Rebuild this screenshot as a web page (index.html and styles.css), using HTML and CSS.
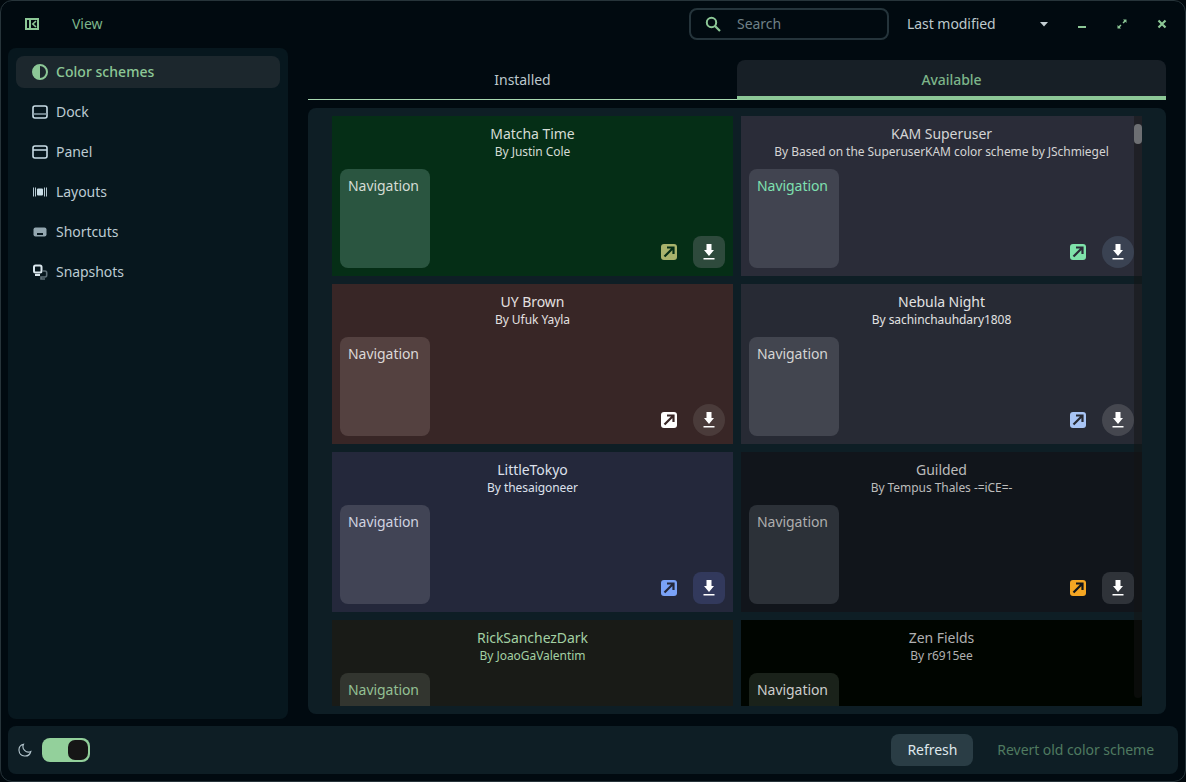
FILE: index.html
```html
<!DOCTYPE html>
<html lang="en">
<head>
  <meta charset="UTF-8" />
  <title>Color schemes</title>
  <link rel="stylesheet" href="styles.css">
</head>
<body>
  <svg class="sprites" width="0" height="0">
    <symbol id="arrow" viewBox="0 0 16 16">
      <rect width="16" height="16" rx="3" fill="var(--accent)" />
      <path d="M3.5 12.5 L11.5 4.5 M6 3.5 H12.5 V10" fill="none" stroke="var(--arrow)" stroke-width="2.2" />
    </symbol>
    <symbol id="download" viewBox="0 0 16 16">
      <path d="M5.5 0 H10.5 V6 H13 L8 12 L3 6 H5.5 Z M2.5 14 H13.5 V15.6 H2.5 Z" fill="#fff" />
    </symbol>
  </svg>

  <div class="window">
    <header class="titlebar">
      <svg class="logo" width="14" height="12" viewBox="0 0 14 12">
        <path fill-rule="evenodd" d="M0 0 H14 V12 H0 Z M2 2 V10 H12 V2 Z" fill="#8cc796" />
        <path d="M4 2 H6 V10 H4 Z" fill="#8cc796" />
        <path d="M11 3 L7.8 6 L11 9" fill="none" stroke="#8cc796" stroke-width="1.6" />
      </svg>
      <span class="view-menu">View</span>
      <div class="search">
        <svg width="16" height="16" viewBox="0 0 16 16"><circle cx="6.5" cy="6.5" r="4.7" fill="none" stroke="#8cc796" stroke-width="2" /><path d="M10 10 L15 15" stroke="#8cc796" stroke-width="2.2" /></svg>
        <span>Search</span>
      </div>
      <span class="sort">Last modified</span>
      <div class="window-controls">
        <svg class="caret" width="10" height="6" viewBox="0 0 10 6"><path d="M1 1 H9 L5 5.5 Z" fill="#c5d0d4" /></svg>
        <svg width="10" height="10" viewBox="0 0 10 10"><path d="M1 7 H9 V9 H1 Z" fill="#8cc796" /></svg>
        <svg width="10" height="10" viewBox="0 0 10 10"><path d="M6 0.5 H9.5 V4 L8.3 2.8 L6.6 4.5 L5.5 3.4 L7.2 1.7 Z M4 9.5 H0.5 V6 L1.7 7.2 L3.4 5.5 L4.5 6.6 L2.8 8.3 Z" fill="#8cc796" /></svg>
        <svg width="10" height="10" viewBox="0 0 10 10"><path d="M1.5 1.5 L8.5 8.5 M8.5 1.5 L1.5 8.5" stroke="#8cc796" stroke-width="2.2" /></svg>
      </div>
    </header>

    <div class="main">
      <nav class="sidebar">
        <a class="side-item active">
          <svg width="16" height="16" viewBox="0 0 16 16"><circle cx="8" cy="8" r="7" fill="none" stroke="#8cc796" stroke-width="2" /><path d="M8 1 A7 7 0 0 0 8 15 Z" fill="#8cc796" /></svg>
          <span>Color schemes</span>
        </a>
        <a class="side-item">
          <svg width="16" height="16" viewBox="0 0 16 16"><rect x="1" y="2" width="14" height="12" rx="2" fill="none" stroke="#c9dde6" stroke-width="1.6" /><path d="M1 10 H15" stroke="#8fa3ac" stroke-width="1.4" /></svg>
          <span>Dock</span>
        </a>
        <a class="side-item">
          <svg width="16" height="16" viewBox="0 0 16 16"><rect x="1" y="2" width="14" height="12" rx="2" fill="none" stroke="#c9dde6" stroke-width="1.6" /><path d="M1 6 H15" stroke="#c9dde6" stroke-width="1.4" /></svg>
          <span>Panel</span>
        </a>
        <a class="side-item">
          <svg width="16" height="16" viewBox="0 0 16 16"><rect x="5" y="4.5" width="6" height="7" rx="1" fill="#c9dde6" /><path d="M1.5 3.5 V12.5 M3.5 3.5 V12.5 M12.5 3.5 V12.5 M14.5 3.5 V12.5" stroke="#c9dde6" stroke-width="0.9" /></svg>
          <span>Layouts</span>
        </a>
        <a class="side-item">
          <svg width="16" height="16" viewBox="0 0 16 16"><rect x="1.5" y="3.5" width="13" height="9" rx="2" fill="#93a7b0" /><rect x="5" y="9" width="6" height="2" fill="#07171e" /></svg>
          <span>Shortcuts</span>
        </a>
        <a class="side-item">
          <svg width="16" height="16" viewBox="0 0 16 16"><path d="M11 7 H13 Q14.7 7 14.7 9 V11 Q14.7 13 13 13 H9 V15 H13" fill="none" stroke="#5f7078" stroke-width="1.6" /><rect x="2" y="1.5" width="7.5" height="7" rx="1.5" fill="none" stroke="#dbe8ee" stroke-width="2" /><path d="M3 11 H8" stroke="#dbe8ee" stroke-width="2" /></svg>
          <span>Snapshots</span>
        </a>
      </nav>

      <section class="content">
        <div class="tabs">
          <div class="tab">Installed</div>
          <div class="tab selected">Available</div>
        </div>
        <div class="panel">
          <div class="scroller">
            <div class="grid">

              <article class="card matcha">
                <h3>Matcha Time</h3>
                <p>By Justin Cole</p>
                <div class="card-body">
                  <div class="nav-box">Navigation</div>
                  <svg class="arrow-icon"><use href="#arrow" /></svg>
                  <button class="get"><svg width="16" height="16"><use href="#download" /></svg></button>
                </div>
              </article>

              <article class="card kam">
                <h3>KAM Superuser</h3>
                <p>By Based on the SuperuserKAM color scheme by JSchmiegel</p>
                <div class="card-body">
                  <div class="nav-box">Navigation</div>
                  <svg class="arrow-icon"><use href="#arrow" /></svg>
                  <button class="get round"><svg width="16" height="16"><use href="#download" /></svg></button>
                </div>
              </article>

              <article class="card brown">
                <h3>UY Brown</h3>
                <p>By Ufuk Yayla</p>
                <div class="card-body">
                  <div class="nav-box">Navigation</div>
                  <svg class="arrow-icon"><use href="#arrow" /></svg>
                  <button class="get round"><svg width="16" height="16"><use href="#download" /></svg></button>
                </div>
              </article>

              <article class="card nebula">
                <h3>Nebula Night</h3>
                <p>By sachinchauhdary1808</p>
                <div class="card-body">
                  <div class="nav-box">Navigation</div>
                  <svg class="arrow-icon"><use href="#arrow" /></svg>
                  <button class="get round"><svg width="16" height="16"><use href="#download" /></svg></button>
                </div>
              </article>

              <article class="card tokyo">
                <h3>LittleTokyo</h3>
                <p>By thesaigoneer</p>
                <div class="card-body">
                  <div class="nav-box">Navigation</div>
                  <svg class="arrow-icon"><use href="#arrow" /></svg>
                  <button class="get"><svg width="16" height="16"><use href="#download" /></svg></button>
                </div>
              </article>

              <article class="card guilded">
                <h3>Guilded</h3>
                <p>By Tempus Thales -=iCE=-</p>
                <div class="card-body">
                  <div class="nav-box">Navigation</div>
                  <svg class="arrow-icon"><use href="#arrow" /></svg>
                  <button class="get"><svg width="16" height="16"><use href="#download" /></svg></button>
                </div>
              </article>

              <article class="card rick">
                <h3>RickSanchezDark</h3>
                <p>By JoaoGaValentim</p>
                <div class="card-body">
                  <div class="nav-box">Navigation</div>
                </div>
              </article>

              <article class="card zen">
                <h3>Zen Fields</h3>
                <p>By r6915ee</p>
                <div class="card-body">
                  <div class="nav-box">Navigation</div>
                </div>
              </article>

            </div>
            <div class="scrollbar"><div class="thumb"></div></div>
          </div>
        </div>
      </section>
    </div>

    <footer class="bottom-bar">
      <svg width="14" height="14" viewBox="0 0 14 14"><path d="M5.5 1.2 A6 6 0 1 0 12.8 8.5 A5.5 5.5 0 0 1 5.5 1.2 Z" fill="none" stroke="#b4c6ce" stroke-width="1.1" /></svg>
      <div class="switch"><div class="knob"></div></div>
      <button class="refresh">Refresh</button>
      <span class="revert">Revert old color scheme</span>
    </footer>
  </div>
</body>
</html>
```

FILE: styles.css
```css
html, body {
  margin: 0;
  height: 100%;
}
body {
  font-family: "Noto Sans", sans-serif;
  font-size: 14px;
  letter-spacing: -0.05px;
  background: #01080d;
  overflow: hidden;
}
.sprites {
  position: absolute;
}
.window {
  box-sizing: border-box;
  height: 782px;
  display: flex;
  flex-direction: column;
  background: #010a10;
  border: 1px solid #27343a;
  border-radius: 12px;
  overflow: hidden;
}

/* title bar */
.titlebar {
  height: 46px;
  margin-bottom: 1px;
  flex: none;
  display: flex;
  align-items: center;
  padding: 0 18px 0 24px;
  color: #bcc8cc;
}
.logo {
  margin-right: 33px;
}
.view-menu {
  color: #7db58a;
  width: 31px;
  margin: 0 586px 2px 0;
}
.search {
  box-sizing: border-box;
  flex: none;
  width: 200px;
  height: 32px;
  display: flex;
  align-items: center;
  gap: 16px;
  padding-left: 14px;
  border: 2px solid #25343b;
  border-radius: 8px;
  color: #6f8087;
}
.search span {
  margin-bottom: 2px;
}
.sort {
  margin: 0 0 2px 18px;
  width: 132px;
}
.window-controls {
  display: flex;
  align-items: center;
  gap: 30px;
}
.caret {
  margin-right: -2px;
}

/* sidebar */
.main {
  flex: 1;
  min-height: 0;
  display: flex;
  gap: 20px;
  padding: 0 19px 0 7px;
}
.sidebar {
  box-sizing: border-box;
  flex: none;
  width: 280px;
  height: 671px;
  padding: 8px;
  background: #07171e;
  border-radius: 8px;
  display: flex;
  flex-direction: column;
  gap: 8px;
}
.side-item {
  height: 32px;
  display: flex;
  align-items: center;
  gap: 8px;
  padding-left: 16px;
  border-radius: 8px;
  color: #bccbd2;
}
.side-item span {
  margin-bottom: 2px;
}
.side-item.active {
  background: #1c272d;
  color: #8cc796;
  font-weight: 500;
  letter-spacing: 0.03px;
}

/* tabs */
.content {
  flex: 1;
  display: flex;
  flex-direction: column;
  padding-top: 12px;
  min-width: 0;
}
.tabs {
  display: flex;
  height: 40px;
  flex: none;
  margin-bottom: 8px;
}
.tab {
  flex: 1;
  display: flex;
  align-items: center;
  justify-content: center;
  color: #bcc8cc;
  box-sizing: border-box;
  border-bottom: 1px solid #a8d8b0;
}
.tab.selected {
  background: #171f26;
  color: #7db58a;
  font-weight: 500;
  border-bottom: 4px solid #8cc796;
  border-radius: 8px 8px 0 0;
  padding-top: 3px;
}

/* card list */
.panel {
  height: 606px;
  box-sizing: border-box;
  padding: 8px 24px;
  background: #0e1e25;
  border-radius: 8px;
}
.scroller {
  position: relative;
  height: 590px;
  overflow: hidden;
}
.grid {
  display: grid;
  grid-template-columns: 401px 401px;
  gap: 8px;
}
.scrollbar {
  position: absolute;
  top: 0;
  right: 0;
  width: 8px;
  height: 582px;
  background: rgba(20, 20, 20, 0.5);
  border-radius: 0 0 4px 4px;
}
.thumb {
  position: absolute;
  top: 8px;
  left: 0;
  width: 8px;
  height: 20px;
  background: #6d6f73;
  border-radius: 4px;
}
.card {
  height: 160px;
  box-sizing: border-box;
  padding-top: 8px;
  background: var(--bg);
  color: var(--text);
  text-align: center;
  display: flex;
  flex-direction: column;
}
.card h3 {
  margin: 0;
  font-size: 14px;
  font-weight: 400;
  line-height: 19px;
}
.card p {
  margin: 0;
  font-size: 12px;
  line-height: 17px;
}
.card-body {
  flex: 1;
  display: flex;
  align-items: flex-end;
  padding: 0 8px 8px;
}
.nav-box {
  box-sizing: border-box;
  width: 90px;
  height: 99px;
  padding: 7px 0 0 8px;
  text-align: left;
  background: var(--nav);
  color: var(--nav-text);
  border-radius: 8px;
  margin-right: auto;
}
.arrow-icon {
  width: 16px;
  height: 16px;
  margin: 0 16px 8px 0;
}
.get {
  width: 32px;
  height: 32px;
  padding: 0;
  border: none;
  border-radius: 8px;
  background: var(--btn);
  display: flex;
  align-items: center;
  justify-content: center;
}
.get.round {
  border-radius: 50%;
}

/* one palette per scheme */
.matcha {
  --bg: #052e16;
  --text: #d5dcd5;
  --nav: #2a5540;
  --nav-text: #d5dcd5;
  --btn: #2e4a3c;
  --accent: #a8b36c;
  --arrow: #052e16;
}
.kam {
  --bg: #2a2c38;
  --text: #d4d4d4;
  --nav: #414450;
  --nav-text: #7fe0b0;
  --btn: #3a4252;
  --accent: #7fe3aa;
  --arrow: #2a2c38;
}
.brown {
  --bg: #382626;
  --text: #e4e0e0;
  --nav: #544140;
  --nav-text: #dcd8d8;
  --btn: #4a3b3a;
  --accent: #ffffff;
  --arrow: #382626;
}
.nebula {
  --bg: #272a34;
  --text: #e2e2e2;
  --nav: #42454f;
  --nav-text: #d4d4d4;
  --btn: #45474f;
  --accent: #a9c5f5;
  --arrow: #272a34;
}
.tokyo {
  --bg: #24283b;
  --text: #dde0ec;
  --nav: #414455;
  --nav-text: #d0d3e0;
  --btn: #32395c;
  --accent: #7aa2f7;
  --arrow: #24283b;
}
.guilded {
  --bg: #11151b;
  --text: #bcbcbc;
  --nav: #2c3138;
  --nav-text: #aeaeae;
  --btn: #2f3339;
  --accent: #f5a623;
  --arrow: #11151b;
}
.rick {
  --bg: #191b17;
  --text: #a3d0a3;
  --nav: #32352f;
  --nav-text: #94c094;
}
.zen {
  --bg: #000500;
  --text: #b0b0b0;
  --nav: #1a221a;
  --nav-text: #cccccc;
}

/* bottom bar */
.bottom-bar {
  flex: none;
  height: 48px;
  margin: 6px 7px 7px;
  padding: 0 24px 0 10px;
  display: flex;
  align-items: center;
  background: #0e1e25;
  border-radius: 8px;
}
.switch {
  box-sizing: border-box;
  width: 48px;
  height: 24px;
  margin-left: 10px;
  padding: 2px;
  display: flex;
  justify-content: flex-end;
  background: #93d09b;
  border-radius: 8px;
}
.knob {
  width: 20px;
  height: 20px;
  background: #161616;
  border-radius: 7px;
}
.refresh {
  width: 82px;
  height: 32px;
  margin-left: auto;
  padding: 0 0 2px;
  border: none;
  border-radius: 8px;
  background: #2a3d45;
  color: #dfe8ec;
  font: inherit;
  letter-spacing: inherit;
}
.revert {
  margin: 0 0 2px 24px;
  color: #4f7a60;
}
```
